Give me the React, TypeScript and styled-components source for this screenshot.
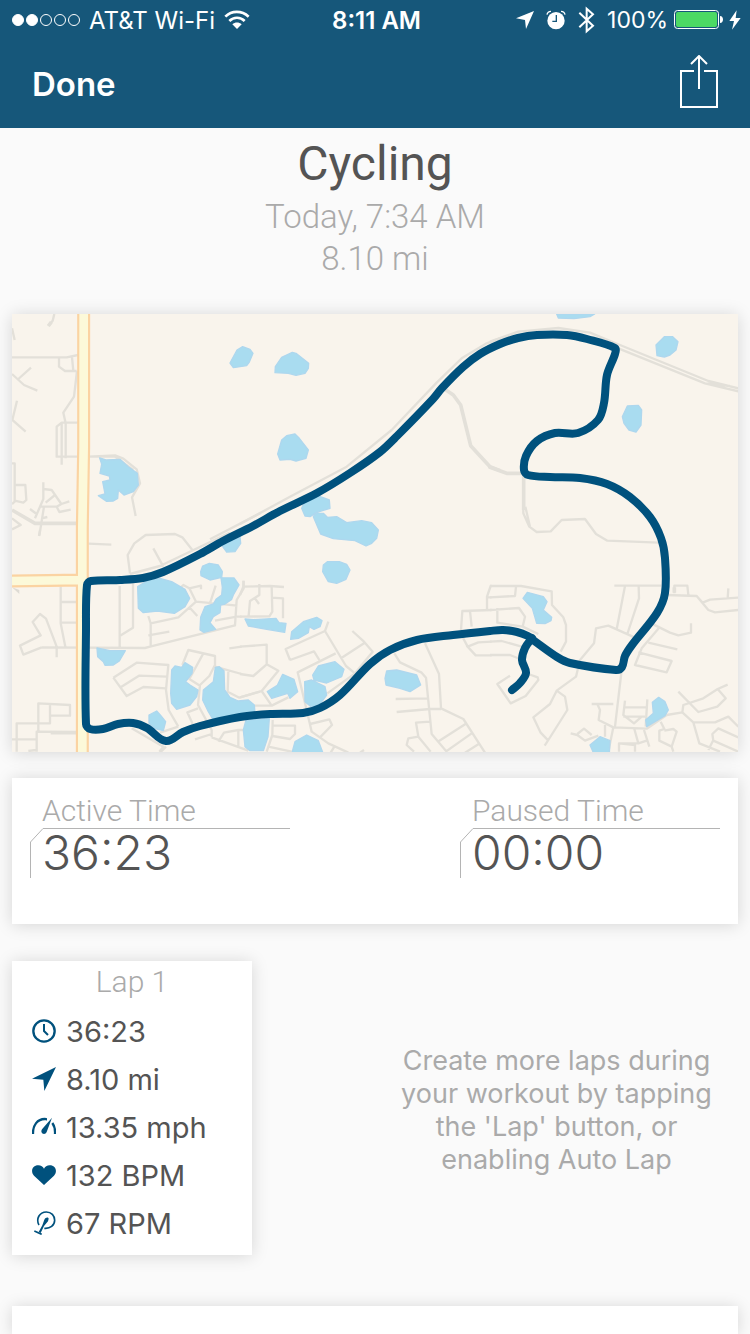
import React from "react";
import styled, { createGlobalStyle } from "styled-components";

const GlobalStyle = createGlobalStyle`
  *, *::before, *::after { box-sizing: border-box; }
  body { margin: 0; background: #fafafa; }
`;

const colors = {
  bar: "#16577a",
  accent: "#00517d",
  text: "#545454",
  muted: "#aaaaaa",
  rule: "#b4b4b4",
};

const uiFont = `Inter, "Liberation Sans", sans-serif`;
const displayFont = `Roboto, "Open Sans", sans-serif`;

const Page = styled.div`
  display: flex;
  flex-direction: column;
  min-height: 100vh;
  overflow: hidden;
  color: ${colors.text};
  font-family: ${uiFont};
`;

const TopBar = styled.header`
  background: ${colors.bar};
  color: #fff;
`;

const StatusBar = styled.div`
  display: grid;
  grid-template-columns: 1fr auto 1fr;
  align-items: center;
  height: 40px;
  padding: 0 9px 0 12px;
  font-size: 23px;
`;

const StatusGroup = styled.div<{ $end?: boolean; $gap: number }>`
  display: flex;
  align-items: center;
  justify-content: ${(p) => (p.$end ? "flex-end" : "flex-start")};
  gap: ${(p) => p.$gap}px;
  white-space: nowrap;
`;

const Carrier = styled.span`
  font-size: 24px;
`;

const Clock = styled.time`
  font-size: 24px;
  font-weight: 600;
`;

const SignalDots = styled.span`
  display: flex;
  gap: 2px;
`;

const Dot = styled.span<{ $on: boolean }>`
  width: 12px;
  height: 12px;
  border: 1px solid #fff;
  border-radius: 50%;
  background: ${(p) => (p.$on ? "#fff" : "transparent")};
`;

const NavBar = styled.nav`
  display: flex;
  align-items: center;
  justify-content: space-between;
  height: 88px;
  padding: 0 32px;
`;

const BarButton = styled.button`
  display: flex;
  padding: 0;
  border: 0;
  background: none;
  color: #fff;
  font: 600 33px ${uiFont};
  cursor: pointer;
`;

const Heading = styled.section`
  padding: 6px 12px 34px;
  color: ${colors.muted};
  font: 300 33px/42px ${displayFont};
  text-align: center;
`;

const Title = styled.h1`
  margin: 0;
  padding-bottom: 2px;
  color: ${colors.text};
  font: 400 48px/60px ${displayFont};
`;

const Line = styled.p`
  margin: 0;
`;

const Card = styled.section`
  background: #fff;
  box-shadow: 0 1px 16px rgba(0, 0, 0, 0.15);
`;

const MapCard = styled(Card)`
  margin: 0 12px 26px;
`;

const MapSvg = styled.svg`
  display: block;
  width: 100%;
  height: auto;
  background: #f9f4ec;
`;

const StatsCard = styled(Card)`
  display: flex;
  justify-content: space-between;
  margin: 0 12px 37px;
  padding: 16px 18px 46px;
`;

const Stat = styled.div`
  width: 260px;
`;

const StatLabel = styled.div`
  padding-left: 12px;
  color: ${colors.muted};
  font: 300 30px/34px ${displayFont};
`;

const StatValue = styled.div`
  position: relative;
  padding-left: 12px;
  font-size: 48px;
  font-weight: 300;
  line-height: 50px;
`;

const Bracket = styled.svg`
  position: absolute;
  top: 0;
  left: 0;
  fill: none;
  stroke: ${colors.rule};
`;

const Laps = styled.section`
  display: grid;
  grid-template-columns: 1fr 1fr;
  align-items: center;
  margin: 0 12px 51px;
`;

const LapCard = styled(Card)`
  width: 240px;
  padding-bottom: 8px;
`;

const LapTitle = styled.h2`
  margin: 0;
  padding-bottom: 4px;
  color: ${colors.muted};
  font: 300 30px/42px ${displayFont};
  text-align: center;
`;

const LapList = styled.ul`
  margin: 0;
  padding: 0 20px;
  list-style: none;
`;

const LapRow = styled.li`
  display: flex;
  align-items: center;
  gap: 10px;
  height: 48px;
  font-size: 29px;
  white-space: nowrap;
`;

const LapIcon = styled.svg`
  flex: none;
  width: 24px;
  height: 24px;
  color: ${colors.accent};
`;

const Hint = styled.p`
  justify-self: center;
  max-width: 330px;
  margin: 0;
  padding-top: 4px;
  color: ${colors.muted};
  font-size: 27px;
  line-height: 33px;
  text-align: center;
`;

const NextCard = styled(Card)`
  flex: 1;
  min-height: 28px;
  margin: 0 12px;
`;

type Tile = { x: number; y: number; roads: string; wide?: string; water: string };

const tiles: Tile[] = [
  {
    x: -36,
    y: -42,
    roads:
      "M163 42L158 62L145 78M36 85L44 120M36 172H200L234 165M177 172V200L195 213H230M216 172L220 213M231 213L222 290L190 338L197 370M36 222L72 255L112 272M55 237L93 203M51 302L37 360L77 395M233 368H185L170 380V470H345M185 370V494M197 370V475M265 470L345 466L370 476L410 508L420 550L396 592L407 648M345 470L400 510M36 490H44V605L36 612M44 555H76L79 600L70 608L44 602M130 547V597L105 655M130 567L155 570L184 612L208 604M137 608L165 585M120 620H170L184 612M170 620L178 636L212 629M90 627L110 642M132 620L118 707M125 655L142 651M36 655L62 675L36 688M630 718L780 640",
    wide: "M36 630L105 670H230M154 66L145 78",
    water:
      "M728 140L750 148L759 160L748 186L740 197L700 203L690 189L711 150ZM299 474L318 480L360 478L385 500L412 520L415 555L400 575L372 585L355 570L353 595L340 603L320 604L295 587L315 582L308 545L330 540L328 528L300 520L305 492Z",
  },
  {
    x: 684,
    y: -42,
    roads: "M0 672L150 590L320 500L455 390L590 248L665 175L740 130L780 115",
    wide: "M610 265L640 285L662 315L692 437L750 500L780 512",
    water:
      "M157 157L168 160L206 190L205 205L195 220L168 226L145 220L105 218L106 200L125 172ZM165 402L178 415L205 450L198 475L168 483L150 478L120 480L113 462L125 420L140 407ZM185 625L195 603L235 588L268 600L270 625L230 637L210 650L195 648ZM220 650L230 638L250 640L262 652L290 650L320 668L365 662L395 668L415 690L410 715L395 730L378 738L345 722L280 716L242 702Z",
  },
  {
    x: 1434,
    y: -42,
    roads:
      "M0 125L85 95L205 84L300 98L390 135L655 243L745 265M385 145L645 250L745 274M645 250L720 258M100 620V640L118 680L140 696L182 694L215 660L285 657L318 702L352 722L505 728M106 620L120 680",
    wide: "M30 512L0 502L50 520H101V630",
    water:
      "M200 42L205 54L252 56L300 50L314 42ZM498 135L523 110L548 110L564 125L558 150L540 165L523 171L501 167ZM397 350L412 318L445 316L455 330L453 375L438 396L417 390L402 370Z",
  },
  {
    x: -36,
    y: 648,
    roads:
      "M120 0L117 18M265 41L334 44M390 130L383 75L403 40L437 15L525 12L547 22L577 60M460 55L490 110M390 132L480 108L690 8M182 170V280L196 350M182 216H230M182 278H230M125 352L435 354L450 350L705 286L710 210L731 175V152M125 352L70 374L60 347L122 316L98 276L120 252L138 266L170 350V382M359 358V168M399 160V293L359 318M445 258L452 280V350M452 280L535 262L588 215L568 175L550 165L543 172M568 175L603 167V178M568 232L592 258M588 215L712 227M647 167L630 220M445 316L508 305M645 272L710 260H725M688 355L725 350M340 443L410 398L505 405L498 480L506 540L535 590M340 443L380 498L430 471L498 475M362 472L417 437L500 440M547 405L565 360L645 378V405L628 438L600 465L594 525L635 600V622M610 370L568 447L600 467M645 410L725 432M685 425L683 485L718 503L780 485M594 535L562 547L578 582M585 628L635 612M635 622L745 662M655 635L672 608L715 600H740M715 600V650M115 605V520L210 525V557H150M150 523V580H50V665M36 628H110M110 665V605L230 606M152 610H228M85 663L108 660M395 595L490 650L478 665M498 650L480 668M480 608L535 590",
    water:
      "M665 45L720 20L722 40L705 65L680 66ZM602 125L608 108L628 100L655 105L667 125L665 142L630 150L603 137ZM413 170L445 150L480 145L515 155L555 178L569 205L555 230L523 250L472 243L430 248L415 235ZM663 143L702 144L717 165L700 195L695 208L675 222L662 225L660 248L640 260L630 278L647 298L612 307L600 300L602 262L615 230L640 222L648 208L665 195L667 172ZM291 354L330 362L376 362L358 393L340 405L315 406L310 395L293 380ZM515 420L525 408L545 412L555 398L578 412L576 430L557 455L570 465L594 480L590 500L570 525L530 538L515 520L512 490ZM447 555L470 543L482 556L497 575L490 602L465 596L447 580ZM646 412L658 410L672 422L674 480L690 502L715 513L745 510L763 525L765 550L640 570L625 545L608 510L610 480L640 455Z",
  },
  {
    x: 684,
    y: 648,
    roads:
      "M10 152V170L90 168L132 171M0 195L10 170M58 162V195L30 213L26 257M45 205L57 222M95 170L97 245L88 259L0 260M95 203L129 205V265M0 350L80 344V403L40 438L0 432M80 403L115 422L65 483L0 502M65 483L95 527L145 502M45 527H95M150 390L137 357L255 303L265 275M150 390L222 364L238 390M255 303L318 408L345 430M303 385L372 340M337 303L372 335L398 365L345 430L262 490M287 370L173 427L200 540L215 605L265 640L325 668M210 582L268 568L276 585L240 622M98 570L97 615L80 665M98 587H165V612L150 627L97 618M85 650L155 665M283 650L272 668M360 668L372 660M463 370L480 397L545 428L558 443L575 612L620 665M555 340L597 432L603 535L670 567L735 668M467 507L562 505M470 546L570 537H603M570 575L528 578L535 620L505 625L500 645L522 665M535 620L572 665M597 633L680 580M617 665L695 610M675 668L715 643M663 300L667 243L755 240M690 243L695 290M667 320L683 350L715 337L755 335M680 347L707 376H755M741 237V200L752 168H755M741 202H755",
    water:
      "M15 267L40 269L108 265L117 278L138 280L134 307L80 298L25 288ZM152 328L155 305L190 275L230 262L246 272L240 290L222 298L208 290L205 308L175 325ZM248 125L250 105L262 95L298 95L320 103L330 120L318 148L290 160L265 155ZM82 485L112 466L128 433L162 448L173 485L150 505L143 490L95 505ZM218 435L235 408L285 395L312 418L305 440L260 459L222 450ZM194 455L215 450L255 470L260 495L240 522L215 532L195 515ZM10 600L18 570L88 565L84 620L70 662L30 662L15 650ZM155 672L165 635L200 615L235 632L250 672ZM435 445L440 423L470 420L530 435L542 465L510 485L480 475L438 465Z",
  },
  {
    x: 1434,
    y: 648,
    roads:
      "M0 168H93L185 184L186 225L220 262L228 285V335L212 365M0 202L75 198L78 170M0 240L87 234L105 260L98 290M22 234V278L98 290L145 312M0 335L35 333L95 350M0 375H60L90 387M373 167H515M405 168L380 298M446 170L447 205L412 312M440 325L380 298L355 287L318 295L312 340L270 390L258 440L200 482L180 522L130 562L152 608L175 632M200 482L225 500L232 540L175 630L164 647M60 437L22 462L62 520L107 498L145 450L143 442L115 432M530 195L620 198L638 218L660 209L745 203M620 198L655 240L675 247L745 240M715 175L713 205M553 190V167H592L595 195M490 283L540 308L565 316L603 308V280M510 290L455 355L435 405L530 427L545 393L445 367M475 338L562 358M395 420L375 590M305 522H370M322 522L330 540L326 570L370 592L470 596L530 555L577 547L610 577H675L715 560L745 590M345 585V620M242 610L262 615L285 632L325 617M262 612L282 596L305 615M405 512L400 555L432 580L455 560M405 532H470M400 560H465M472 508L467 590M565 485L625 546L682 530L707 505L683 477L713 464M683 477L640 505L580 525L577 547M610 577L628 640L690 665M745 622L685 595L667 612L670 632L745 665M670 630L655 660M433 597L445 640L470 632M462 600L478 650M387 665V640L435 645V665M387 640L445 640M370 592L355 665M512 575L523 597L508 602V632L545 650L560 605L550 597L523 602M545 650L550 665",
    wide: "M553 188V172",
    water:
      "M99 205L112 187L160 200L171 215L160 240L185 262L183 272L165 281L140 280L127 235ZM487 517L506 502L525 515L535 540L525 557L495 575L470 590L467 570L490 550ZM300 645L330 620L360 632L358 672H312Z",
  },
];

type Point = [number, number];

const loop: Point[] = [
  [532, 639], [528, 636], [517, 632], [503, 630], [490, 631], [453, 635], [417, 640],
  [390, 650], [370, 664], [340, 695], [320, 708], [303, 713], [270, 714], [240, 717],
  [200, 726], [183, 732], [166, 741], [147, 728], [133, 723], [118, 724], [103, 729],
  [90, 729], [86, 724], [86, 630], [87, 585], [91, 581], [120, 580], [143, 578],
  [163, 572], [200, 554], [223, 541], [253, 526], [280, 511], [317, 493], [350, 473],
  [380, 452], [397, 436], [433, 399], [442, 388], [463, 367], [480, 354], [500, 344],
  [518, 338], [537, 335], [567, 335], [587, 339], [615, 348], [615, 354], [607, 375],
  [604, 403], [598, 420], [578, 433], [555, 433], [537, 441], [526, 456], [524, 470],
  [528, 475], [550, 477], [580, 478], [607, 484], [630, 497], [650, 517], [661, 538],
  [665, 558], [665, 593], [657, 613], [632, 645], [625, 656], [622, 667], [616, 670],
  [570, 663], [557, 657], [533, 640],
];

const spur: Point[] = [
  [532, 638], [525, 648], [522, 660], [526, 673], [520, 683], [512, 690],
];

const distance = (a: Point, b: Point) => Math.hypot(a[0] - b[0], a[1] - b[1]);

/* Spline through every recorded point; handles never outgrow their own segment. */
const smooth = (pts: Point[]) =>
  pts.slice(1).reduce((d, p, i) => {
    const a = pts[Math.max(i - 1, 0)];
    const b = pts[i];
    const c = pts[Math.min(i + 2, pts.length - 1)];
    const reach = distance(b, p) / 3;
    const k1 = reach / Math.max(distance(a, p), 1);
    const k2 = reach / Math.max(distance(b, c), 1);
    return `${d}C${b[0] + (p[0] - a[0]) * k1} ${b[1] + (p[1] - a[1]) * k1} ${p[0] - (c[0] - b[0]) * k2} ${
      p[1] - (c[1] - b[1]) * k2
    } ${p[0]} ${p[1]}`;
  }, `M${pts[0][0]} ${pts[0][1]}`);

const RouteMap = () => (
  <MapSvg viewBox="0 0 2178 1314" role="img" aria-label="Route map">
    <g fill="none" stroke="#e3e0d9" strokeLinejoin="round">
      {tiles.map((t, i) => (
        <g key={i} transform={`translate(${t.x} ${t.y})`}>
          <path d={t.roads} strokeWidth="7" />
          {t.wide && <path d={t.wide} strokeWidth="11" />}
        </g>
      ))}
    </g>
    <path d="M0 820L22 828V840Z" fill="#dedbd4" />
    <g fill="#a9dcf0" stroke="#aed7ee" strokeWidth="4" strokeLinejoin="round">
      {tiles.map((t, i) => (
        <path key={i} d={t.water} transform={`translate(${t.x} ${t.y})`} />
      ))}
    </g>
    <g fill="none">
      <path d="M0 801L212 798M215 0V400L211 640V1314" stroke="#fbd3a2" strokeWidth="39" />
      <path d="M0 801L212 798M215 0V400L211 640V1314" stroke="#fcf9d9" strokeWidth="26" />
    </g>
    <g
      transform="scale(3) translate(-12 -314)"
      fill="none"
      stroke={colors.accent}
      strokeWidth="8"
      strokeLinecap="round"
      strokeLinejoin="round"
    >
      <path d={smooth(loop)} />
      <path d={smooth(spur)} />
    </g>
  </MapSvg>
);

const WifiIcon = () => (
  <svg width="26" height="20" viewBox="0 0 78 60" fill="none" stroke="#fff" strokeWidth="8">
    <path d="M4 20C23 1 53 1 74 20" />
    <path d="M16 33C29 20 49 20 62 33" />
    <path d="M25 43C33 36 45 36 53 43L39 57Z" fill="#fff" stroke="none" />
  </svg>
);

const LocationIcon = () => (
  <svg width="18" height="18" viewBox="0 0 54 54" fill="#fff">
    <path d="M0 22L54 0L30 54L27 27Z" />
  </svg>
);

const AlarmIcon = () => (
  <svg width="20" height="20" viewBox="0 0 60 60" fill="none">
    <circle cx="30" cy="32" r="26" fill="#fff" />
    <path d="M3 14C4 8 9 4 15 4M57 14C56 8 51 4 45 4" stroke="#fff" strokeWidth="4" />
    <path d="M31 15V34H19" stroke={colors.bar} strokeWidth="4" />
  </svg>
);

const BluetoothIcon = () => (
  <svg width="17" height="28" viewBox="0 0 51 84" fill="none" stroke="#fff" strokeWidth="6">
    <path d="M4 20L45 59L26 76V8L45 25L4 64" />
  </svg>
);

const BatteryIcon = () => (
  <svg width="49" height="20" viewBox="0 0 49 20" fill="none">
    <rect x="0.5" y="0.5" width="44" height="18" rx="3" stroke="#fff" />
    <rect x="2" y="2" width="41" height="15" rx="2" fill="#4cd964" />
    <path d="M46 6C50 6 50 13 46 13Z" fill="#fff" />
  </svg>
);

const BoltIcon = () => (
  <svg width="12" height="20" viewBox="0 0 36 60" fill="#fff">
    <path d="M23 1L1 33H15L9 59L35 24H20Z" />
  </svg>
);

const ShareIcon = () => (
  <svg width="38" height="58" viewBox="0 0 38 58" fill="none" stroke="#fff" strokeWidth="2">
    <path d="M14 16H1V52H37V16H24M19 34V2M11 9L19 1L27 9" />
  </svg>
);

const lapStats: { label: string; value: string; icon: React.ReactNode }[] = [
  {
    label: "Time",
    value: "36:23",
    icon: (
      <g fill="none" stroke="currentColor" strokeWidth="7">
        <circle cx="36" cy="36" r="32" />
        <path d="M36 15V36L48 48" strokeWidth="6" />
      </g>
    ),
  },
  {
    label: "Distance",
    value: "8.10 mi",
    icon: <path d="M72 0L37 72L34 38L0 35Z" fill="currentColor" />,
  },
  {
    label: "Speed",
    value: "13.35 mph",
    icon: (
      <g fill="none" stroke="currentColor" strokeWidth="7">
        <path d="M3 57C2 30 17 12 38 12C41 12 43 13 45 13" />
        <path d="M61 24C67 32 70 43 69 57" />
        <path d="M60 8L44 51C41 60 28 58 28 49C28 47 29 45 30 43Z" fill="currentColor" stroke="none" />
      </g>
    ),
  },
  {
    label: "Heart rate",
    value: "132 BPM",
    icon: (
      <path
        d="M36 66L6 38C-5 26 0 7 19 7C27 7 33 11 36 17C39 11 45 7 53 7C72 7 77 26 66 38Z"
        fill="currentColor"
      />
    ),
  },
  {
    label: "Cadence",
    value: "67 RPM",
    icon: (
      <g fill="none" stroke="currentColor" strokeWidth="5">
        <path d="M21 42C11 24 22 3 43 3C58 3 68 14 68 28C68 43 54 54 37 52" />
        <path d="M50 23L48 31L36 45L26 66L20 63L31 43L37 26C40 19 49 17 50 23Z" fill="currentColor" stroke="none" />
        <path d="M7 60L29 70" />
      </g>
    ),
  },
];

const TimeStat = ({ label, value }: { label: string; value: string }) => (
  <Stat>
    <StatLabel>{label}</StatLabel>
    <StatValue>
      <Bracket width="260" height="50" viewBox="0 0 260 50" aria-hidden="true">
        <path d="M0.5 50V14L13 0.5H260" />
      </Bracket>
      {value}
    </StatValue>
  </Stat>
);

export default function App() {
  return (
    <Page>
      <GlobalStyle />
      <TopBar>
        <StatusBar>
          <StatusGroup $gap={9}>
            <SignalDots>
              {[true, true, false, false, false].map((on, i) => (
                <Dot key={i} $on={on} />
              ))}
            </SignalDots>
            <Carrier>AT&amp;T Wi-Fi</Carrier>
            <WifiIcon />
          </StatusGroup>
          <Clock>8:11 AM</Clock>
          <StatusGroup $end $gap={6}>
            <StatusGroup $gap={12}>
              <LocationIcon />
              <AlarmIcon />
              <BluetoothIcon />
              <span>100%</span>
            </StatusGroup>
            <BatteryIcon />
            <BoltIcon />
          </StatusGroup>
        </StatusBar>
        <NavBar>
          <BarButton type="button">Done</BarButton>
          <BarButton type="button" aria-label="Share">
            <ShareIcon />
          </BarButton>
        </NavBar>
      </TopBar>

      <Heading>
        <Title>Cycling</Title>
        <Line>Today, 7:34 AM</Line>
        <Line>8.10 mi</Line>
      </Heading>

      <MapCard>
        <RouteMap />
      </MapCard>

      <StatsCard>
        <TimeStat label="Active Time" value="36:23" />
        <TimeStat label="Paused Time" value="00:00" />
      </StatsCard>

      <Laps>
        <LapCard as="article">
          <LapTitle>Lap 1</LapTitle>
          <LapList>
            {lapStats.map((s) => (
              <LapRow key={s.label}>
                <LapIcon viewBox="0 0 72 72" role="img" aria-label={s.label}>
                  {s.icon}
                </LapIcon>
                {s.value}
              </LapRow>
            ))}
          </LapList>
        </LapCard>
        <Hint>Create more laps during your workout by tapping the 'Lap' button, or enabling Auto Lap</Hint>
      </Laps>

      <NextCard />
    </Page>
  );
}
